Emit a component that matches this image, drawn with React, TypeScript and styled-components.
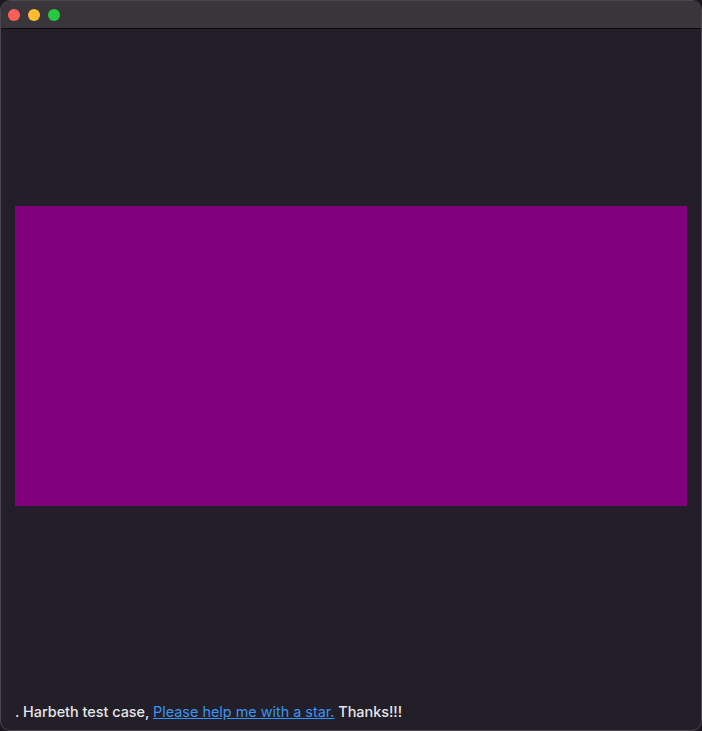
import React from "react";
import styled, { createGlobalStyle } from "styled-components";

const Global = createGlobalStyle`
  html, body { margin: 0; padding: 0; background: #1b181f; }
  body { font-family: Inter, "Liberation Sans", sans-serif; }
`;

const Window = styled.div`
  box-sizing: border-box;
  width: 702px;
  height: 731px;
  display: flex;
  flex-direction: column;
  background: #231f29;
  border: 1px solid #4a474e;
  border-radius: 10px;
  overflow: hidden;
`;

const TitleBar = styled.div`
  height: 27px;
  flex: none;
  display: flex;
  align-items: center;
  gap: 8px;
  padding-left: 7px;
  background: #38363b;
  border-bottom: 1px solid #0c0b0e;
`;

const Light = styled.span<{ $c: string }>`
  width: 12px;
  height: 12px;
  border-radius: 50%;
  background: ${(p) => p.$c};
`;

const Content = styled.div`
  flex: 1;
  display: flex;
  flex-direction: column;
  padding: 177px 14px 0 14px;
`;

const Canvas = styled.div`
  height: 300px;
  background: #800080;
`;

const Footer = styled.div`
  margin-top: auto;
  padding: 0 0 9px 0;
  font-size: 14.4px;
  line-height: 18px;
  color: #e6e6e8;
  font-weight: 500;
`;

const Link = styled.a`
  color: #3a95f2;
  text-decoration: underline;
  font-weight: 400;
`;

export default function App() {
  return (
    <>
      <Global />
      <Window>
        <TitleBar>
          <Light $c="#fe5f57" />
          <Light $c="#febc2e" />
          <Light $c="#28c840" />
        </TitleBar>
        <Content>
          <Canvas />
          <Footer>
            . Harbeth test case, <Link href="#">Please help me with a star.</Link> Thanks!!!
          </Footer>
        </Content>
      </Window>
    </>
  );
}
